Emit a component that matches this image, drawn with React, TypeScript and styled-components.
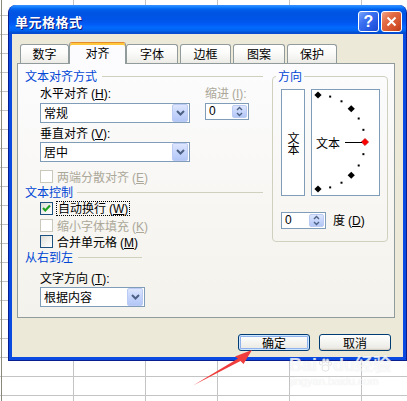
import React from "react";
import styled, { createGlobalStyle, css } from "styled-components";

const GlobalStyle = createGlobalStyle`
  html, body { margin: 0; padding: 0; }
  body {
    width: 407px;
    height: 401px;
    overflow: hidden;
    background: #fff;
    font-family: "Noto Sans CJK SC", "Noto Sans", sans-serif;
    font-size: 12px;
    color: #000;
  }
  * { box-sizing: border-box; }
`;

const Page = styled.div`
  position: relative;
  width: 407px;
  height: 401px;
  overflow: hidden;
  padding: 5px 0 0 8px;
  background-color: #fff;
  background-image:
    linear-gradient(90deg, transparent 1px, #8a877c 1px, #8a877c 2px, transparent 2px),
    linear-gradient(90deg, #c4c4c4 1px, transparent 1px),
    linear-gradient(180deg, #c4c4c4 1px, transparent 1px);
  background-size: 100% 100%, 72px 100%, 100% 19px;
  background-position: 0 0, 73px 0, 0 15px;
  background-repeat: no-repeat, repeat-x, repeat-y;
`;

const Dialog = styled.div`
  width: 399px;
  height: 356px;
  display: flex;
  flex-direction: column;
  background: #0b4ae0;
  border: 1px solid #0a1f8f;
  border-top: 0;
  border-radius: 8px 8px 0 0;
  overflow: hidden;
`;

const TitleBar = styled.div`
  height: 29px;
  flex: none;
  display: flex;
  align-items: center;
  justify-content: space-between;
  padding: 4px 4px 0 6px;
  background: linear-gradient(
    180deg,
    #3a93ff 0%,
    #127dff 8%,
    #0262ee 14%,
    #0057e5 22%,
    #0054e3 30%,
    #0055eb 56%,
    #005bf5 66%,
    #026afe 78%,
    #0062ef 88%,
    #0052d6 94%,
    #0a47cc 100%
  );
`;

const Title = styled.span`
  color: #fff;
  font-weight: bold;
  font-size: 13px;
  line-height: 16px;
  letter-spacing: 0.5px;
  text-shadow: 1px 1px 0 #0a1883;
`;

const TitleButtons = styled.div`
  display: flex;
  gap: 2px;
`;

const CaptionButton = styled.div<{ $kind: "help" | "close" }>`
  width: 21px;
  height: 21px;
  border: 1px solid #fff;
  border-radius: 3px;
  display: flex;
  align-items: center;
  justify-content: center;
  color: #fff;
  font-family: "Liberation Sans", Arial, sans-serif;
  font-weight: bold;
  font-size: 16px;
  line-height: 1;
  ${(p) =>
    p.$kind === "help"
      ? css`
          background: linear-gradient(135deg, #7aa6fb 0%, #3d72f2 35%, #2457e2 75%, #1a48cf 100%);
        `
      : css`
          background: linear-gradient(135deg, #f3a58a 0%, #e36b43 35%, #d2502a 75%, #b93c18 100%);
        `}
`;

const Body = styled.div`
  flex: 1;
  margin: 0 3px 3px;
  background: #ece9d8;
  padding: 8px 8px 0 5px;
  display: flex;
  flex-direction: column;
`;

const TabRow = styled.div`
  height: 21px;
  display: flex;
  align-items: flex-end;
  padding-left: 3px;
  position: relative;
  z-index: 1;
`;

const Tab = styled.div<{ $active?: boolean; $w: number; $ml: number }>`
  width: ${(p) => p.$w}px;
  margin-left: ${(p) => p.$ml}px;
  text-align: center;
  line-height: 14px;
  border: 1px solid #919b9c;
  border-bottom: 0;
  border-radius: 3px 3px 0 0;
  ${(p) =>
    p.$active
      ? css`
          height: 22px;
          margin-bottom: -1px;
          padding-top: 3px;
          background: #fcfcfe;
          border-top: 1px solid #e68b2c;
          box-shadow: inset 0 2px 0 #ffc83c;
        `
      : css`
          height: 19px;
          padding-top: 2px;
          background: linear-gradient(180deg, #ffffff 0%, #fbfbfa 45%, #ecebe6 100%);
        `}
`;

const Panel = styled.div`
  height: 255px;
  border: 1px solid #919b9c;
  background: linear-gradient(180deg, #fcfcfe 0%, #f7f6f2 60%, #f3f2ec 100%);
  display: grid;
  grid-template-columns: 240px 116px;
  column-gap: 7px;
  align-items: start;
  padding: 5px 6px 0 7px;
`;

const Column = styled.div`
  display: flex;
  flex-direction: column;
`;

const SectionHead = styled.div<{ $mt?: number }>`
  display: flex;
  align-items: center;
  height: 14px;
  line-height: 14px;
  color: #0046d5;
  margin-top: ${(p) => p.$mt ?? 0}px;
  white-space: nowrap;
`;

const SectionRule = styled.span<{ $gap: number; $w?: number }>`
  height: 1px;
  margin-left: ${(p) => p.$gap}px;
  background: #d0d0bf;
  ${(p) =>
    p.$w
      ? css`
          width: ${p.$w}px;
          flex: none;
        `
      : css`
          flex: 1;
          margin-right: 2px;
        `}
`;

const Indent = styled.div`
  display: flex;
  flex-direction: column;
  margin-left: 15px;
`;

const TopGrid = styled.div`
  display: grid;
  grid-template-columns: 150px 44px;
  column-gap: 15px;
  row-gap: 3px;
  margin-top: 3px;
  align-items: start;
`;

const Label = styled.div<{ $disabled?: boolean; $mt?: number }>`
  height: 14px;
  line-height: 14px;
  white-space: nowrap;
  margin-top: ${(p) => p.$mt ?? 0}px;
  color: ${(p) => (p.$disabled ? "#aca899" : "#000")};
`;

const Accel = styled.span`
  font-family: "Liberation Sans", Arial, sans-serif;
  font-size: 12px;
  margin-left: 3px;
`;

const Combo = styled.div<{ $w: number; $mt?: number }>`
  width: ${(p) => p.$w}px;
  height: 20px;
  margin-top: ${(p) => p.$mt ?? 0}px;
  border: 1px solid #7f9db9;
  background: #fff;
  display: flex;
  align-items: center;
  justify-content: space-between;
  padding: 1px 1px 1px 3px;
  line-height: 16px;
`;

const DropButton = styled.span`
  width: 16px;
  height: 18px;
  border-radius: 2px;
  border: 1px solid #bccbf3;
  background: linear-gradient(180deg, #dde6fd 0%, #c6d5fb 50%, #b3c7f6 100%);
  display: flex;
  align-items: center;
  justify-content: center;
`;

const Spin = styled.div<{ $w: number }>`
  width: ${(p) => p.$w}px;
  height: 17px;
  border: 1px solid #7f9db9;
  background: #fff;
  display: flex;
  align-items: stretch;
  justify-content: space-between;
  padding: 1px 1px 1px 3px;
  line-height: 13px;
  font-family: "Liberation Sans", Arial, sans-serif;
  font-size: 12px;
`;

const SpinButton = styled.span`
  width: 15px;
  border-radius: 2px;
  border: 1px solid #bccbf3;
  background: linear-gradient(180deg, #dde6fd 0%, #c6d5fb 50%, #b3c7f6 100%);
  display: flex;
  align-items: center;
  justify-content: center;
`;

const CheckRow = styled.div<{ $mt: number; $disabled?: boolean }>`
  display: flex;
  align-items: center;
  gap: 4px;
  height: 15px;
  margin-top: ${(p) => p.$mt}px;
  white-space: nowrap;
  color: ${(p) => (p.$disabled ? "#aca899" : "#000")};
`;

const CheckBox = styled.span<{ $disabled?: boolean }>`
  width: 13px;
  height: 13px;
  flex: none;
  display: flex;
  align-items: center;
  justify-content: center;
  ${(p) =>
    p.$disabled
      ? css`
          border: 1px solid #cac8bb;
          background: #fff;
        `
      : css`
          border: 1px solid #1c5180;
          background: linear-gradient(135deg, #dcdcd7 0%, #f2f2ef 55%, #ffffff 100%);
        `}
`;

const FocusText = styled.span`
  border: 1px dotted #000;
  line-height: 11px;
  padding: 0 1px;
  margin-left: -1px;
`;

const GroupBox = styled.fieldset`
  margin: 0;
  min-width: 0;
  padding: 6px 0 12px 8px;
  border: 1px solid #d0d0bf;
  border-radius: 4px;
`;

const GroupLegend = styled.legend`
  padding: 0 2px;
  margin-left: -5px;
  color: #0046d5;
  font-size: 12px;
  line-height: 14px;
`;

const OrientRow = styled.div`
  display: flex;
  gap: 6px;
  height: 107px;
`;

const VertBox = styled.div`
  width: 24px;
  border: 1px solid #7f9db9;
  background: #fff;
  display: flex;
  align-items: center;
  justify-content: center;
`;

const VertText = styled.span`
  writing-mode: vertical-rl;
  text-orientation: upright;
  line-height: 14px;
  letter-spacing: -1px;
`;

const DialBox = styled.div`
  width: 69px;
  border: 1px solid #7f9db9;
  background: #fff;
  display: flex;
`;

const DegreeRow = styled.div`
  display: flex;
  align-items: center;
  gap: 7px;
  margin-top: 16px;
  line-height: 14px;
`;

const ButtonRow = styled.div`
  display: flex;
  justify-content: flex-end;
  gap: 9px;
  margin-top: 16px;
  padding-right: 4px;
`;

const XPButton = styled.div<{ $default?: boolean }>`
  width: 72px;
  height: 17px;
  border: 1px solid #003c74;
  border-radius: 3px;
  text-align: center;
  line-height: 15px;
  background: linear-gradient(180deg, #ffffff 0%, #f5f5f2 45%, #ecebe6 85%, #d8d4c9 100%);
  box-shadow: ${(p) =>
    p.$default
      ? "inset 0 0 0 1px #cee7ff, inset 0 0 0 2px #8fb2ec"
      : "inset 0 -1px 0 #d6d0c5"};
`;

const Overlay = styled.svg`
  position: absolute;
  left: 0;
  top: 0;
  pointer-events: none;
`;

const Watermark = styled.div`
  position: absolute;
  left: 289px;
  top: 355px;
  display: flex;
  flex-direction: column;
  align-items: flex-start;
  color: rgba(255, 255, 255, 0.75);
  text-shadow: 0 0 1px rgba(180, 180, 180, 0.35);
  pointer-events: none;
`;

const WatermarkBrand = styled.div`
  display: flex;
  align-items: center;
  font-family: "Liberation Sans", Arial, "Noto Sans CJK SC", sans-serif;
  font-weight: bold;
  font-size: 18px;
  line-height: 20px;
`;

const WatermarkUrl = styled.div`
  font-family: "Liberation Sans", Arial, sans-serif;
  font-size: 11px;
  line-height: 12px;
  margin-left: 1px;
`;

const Chevron = () => (
  <svg width="9" height="6" viewBox="0 0 9 6">
    <path d="M1 1 L4.5 4.5 L8 1" fill="none" stroke="#4d6185" strokeWidth="2" />
  </svg>
);

const SpinArrows = () => (
  <svg width="7" height="11" viewBox="0 0 7 11">
    <path d="M1 4 L3.5 1.5 L6 4" fill="none" stroke="#4d6185" strokeWidth="1.4" />
    <path d="M1 7 L3.5 9.5 L6 7" fill="none" stroke="#4d6185" strokeWidth="1.4" />
  </svg>
);

const Check = () => (
  <svg width="11" height="11" viewBox="0 0 11 11">
    <path d="M2 5 L4.3 7.5 L9 2.5" fill="none" stroke="#21a121" strokeWidth="2.2" />
  </svg>
);

const Dial = () => {
  const cx = 6;
  const cy = 52;
  const r = 47;
  const angles = [90, 75, 60, 45, 30, 15, 0, -15, -30, -45, -60, -75, -90];
  return (
    <svg width="67" height="105" viewBox="0 0 67 105">
      {angles.map((a) => {
        const rad = (a * Math.PI) / 180;
        const x = cx + r * Math.cos(rad);
        const y = cy - r * Math.sin(rad);
        if (a % 45 === 0) {
          const s = 3.6;
          return (
            <polygon
              key={a}
              points={`${x},${y - s} ${x + s},${y} ${x},${y + s} ${x - s},${y}`}
              fill={a === 0 ? "#ff0000" : "#000"}
              stroke={a === 0 ? "#b00000" : "none"}
              strokeWidth="0.6"
            />
          );
        }
        return <rect key={a} x={x - 1} y={y - 1} width="2" height="2" fill="#000" />;
      })}
      <text
        x="4"
        y="52"
        dominantBaseline="central"
        fontSize="12"
        fontFamily='"Noto Sans CJK SC", sans-serif'
        fill="#000"
      >
        文本
      </text>
      <line x1="33" y1="52.5" x2="50" y2="52.5" stroke="#000" strokeWidth="1" />
    </svg>
  );
};

const Paw = () => (
  <svg width="16" height="16" viewBox="0 0 16 16">
    <g fill="rgba(255,255,255,0.8)" stroke="rgba(180,180,180,0.45)" strokeWidth="0.8">
      <ellipse cx="4" cy="6" rx="1.6" ry="2" />
      <ellipse cx="7" cy="3.5" rx="1.6" ry="2" />
      <ellipse cx="10.5" cy="3.8" rx="1.6" ry="2" />
      <ellipse cx="13" cy="6.5" rx="1.5" ry="1.9" />
      <ellipse cx="8.5" cy="11" rx="3.6" ry="3.2" />
    </g>
  </svg>
);

const tabs = [
  { label: "数字", w: 49, ml: 0 },
  { label: "对齐", w: 57, ml: 0, active: true },
  { label: "字体", w: 52, ml: 0 },
  { label: "边框", w: 51, ml: 2 },
  { label: "图案", w: 52, ml: 2 },
  { label: "保护", w: 50, ml: 2 },
];

export default function App() {
  return (
    <>
      <GlobalStyle />
      <Page>
        <Dialog>
          <TitleBar>
            <Title>单元格格式</Title>
            <TitleButtons>
              <CaptionButton $kind="help">?</CaptionButton>
              <CaptionButton $kind="close">
                <svg width="11" height="11" viewBox="0 0 11 11">
                  <path d="M1.5 1.5 L9.5 9.5 M9.5 1.5 L1.5 9.5" stroke="#fff" strokeWidth="2" />
                </svg>
              </CaptionButton>
            </TitleButtons>
          </TitleBar>
          <Body>
            <TabRow>
              {tabs.map((t) => (
                <Tab key={t.label} $w={t.w} $ml={t.ml} $active={t.active}>
                  {t.label}
                </Tab>
              ))}
            </TabRow>
            <Panel>
              <Column>
                <SectionHead>
                  文本对齐方式
                  <SectionRule $gap={5} />
                </SectionHead>
                <Indent>
                  <TopGrid>
                    <Label>
                      水平对齐<Accel>(<u>H</u>):</Accel>
                    </Label>
                    <Label $disabled>
                      缩进<Accel>(<u>I</u>):</Accel>
                    </Label>
                    <Combo $w={150}>
                      常规
                      <DropButton>
                        <Chevron />
                      </DropButton>
                    </Combo>
                    <Spin $w={44}>
                      0
                      <SpinButton>
                        <SpinArrows />
                      </SpinButton>
                    </Spin>
                  </TopGrid>
                  <Label $mt={3}>
                    垂直对齐<Accel>(<u>V</u>):</Accel>
                  </Label>
                  <Combo $w={150} $mt={2}>
                    居中
                    <DropButton>
                      <Chevron />
                    </DropButton>
                  </Combo>
                  <CheckRow $mt={7} $disabled>
                    <CheckBox $disabled />
                    <span>
                      两端分散对齐<Accel>(<u>E</u>)</Accel>
                    </span>
                  </CheckRow>
                </Indent>
                <SectionHead $mt={1}>
                  文本控制
                  <SectionRule $gap={4} />
                </SectionHead>
                <Indent>
                  <CheckRow $mt={2}>
                    <CheckBox>
                      <Check />
                    </CheckBox>
                    <FocusText>
                      自动换行<Accel>(<u>W</u>)</Accel>
                    </FocusText>
                  </CheckRow>
                  <CheckRow $mt={2} $disabled>
                    <CheckBox $disabled />
                    <span>
                      缩小字体填充<Accel>(<u>K</u>)</Accel>
                    </span>
                  </CheckRow>
                  <CheckRow $mt={1}>
                    <CheckBox />
                    <span>
                      合并单元格<Accel>(<u>M</u>)</Accel>
                    </span>
                  </CheckRow>
                </Indent>
                <SectionHead $mt={1}>
                  从右到左
                  <SectionRule $gap={5} $w={64} />
                </SectionHead>
                <Indent>
                  <Label $mt={7}>
                    文字方向<Accel>(<u>T</u>):</Accel>
                  </Label>
                  <Combo $w={105} $mt={2}>
                    根据内容
                    <DropButton>
                      <Chevron />
                    </DropButton>
                  </Combo>
                </Indent>
              </Column>
              <GroupBox>
                <GroupLegend>方向</GroupLegend>
                <OrientRow>
                  <VertBox>
                    <VertText>文本</VertText>
                  </VertBox>
                  <DialBox>
                    <Dial />
                  </DialBox>
                </OrientRow>
                <DegreeRow>
                  <Spin $w={45}>
                    0
                    <SpinButton>
                      <SpinArrows />
                    </SpinButton>
                  </Spin>
                  <span>
                    度<Accel>(<u>D</u>)</Accel>
                  </span>
                </DegreeRow>
              </GroupBox>
            </Panel>
            <ButtonRow>
              <XPButton $default>确定</XPButton>
              <XPButton>取消</XPButton>
            </ButtonRow>
          </Body>
        </Dialog>
        <Watermark>
          <WatermarkBrand>
            Bai
            <Paw />
            du经验
          </WatermarkBrand>
          <WatermarkUrl>jingyan.baidu.com</WatermarkUrl>
        </Watermark>
        <Overlay width="407" height="401" viewBox="0 0 407 401">
          <polygon
            points="193,385.5 238,358.5 235,356.5 252,350 243.5,364 240.5,361"
            fill="#ef3d3d"
          />
        </Overlay>
      </Page>
    </>
  );
}
